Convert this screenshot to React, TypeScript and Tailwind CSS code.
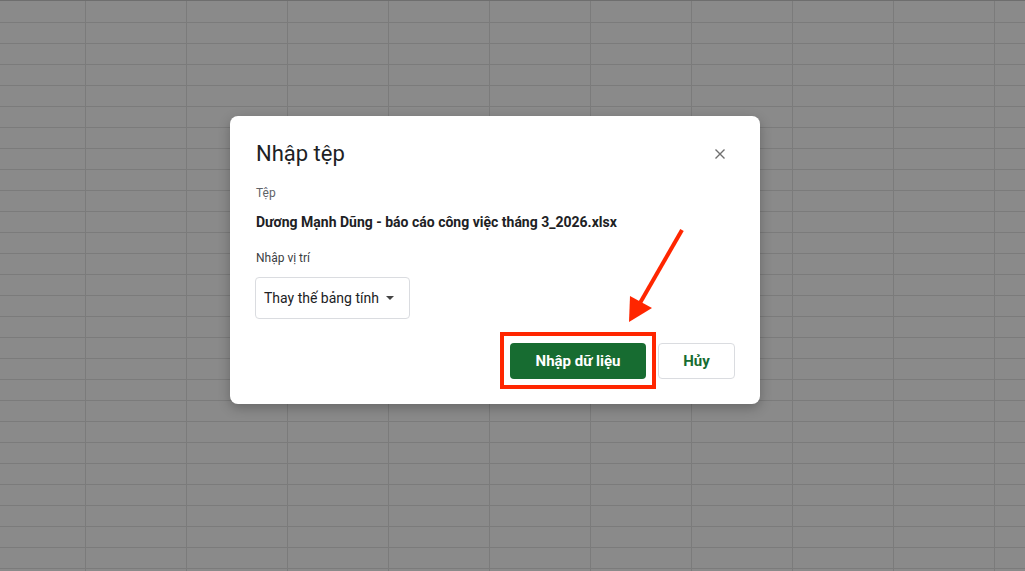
import React from "react";

const ROWS = 28;
const COLS = 11;

export default function App() {
  const rows = Array.from({ length: ROWS });
  const cols = Array.from({ length: COLS });
  return (
    <div className="relative w-[1025px] h-[571px] overflow-hidden bg-[#8a8a8a] font-['Roboto','Liberation_Sans',sans-serif]">
      <div className="flex flex-col border-t border-[#6e6e6e]">
        {rows.map((_, r) => (
          <div key={r} className={`flex h-[21px] shrink-0 ${r === 0 ? "" : "border-t border-[#7b7b7b]"}`}>
            {cols.map((_, c) => (
              <div
                key={c}
                className={
                  c === 0
                    ? "w-[85px] shrink-0"
                    : "w-[101px] shrink-0 border-l border-[#7b7b7b]"
                }
              />
            ))}
          </div>
        ))}
      </div>

      <div className="absolute left-[230px] top-[116px] w-[530px] h-[288px] bg-white rounded-[8px] shadow-[0_4px_12px_rgba(0,0,0,0.25)] pl-[26px] pr-[25px] pt-[24px] pb-[25px] flex flex-col">
        <div className="flex items-start justify-between">
          <div className="text-[22px] leading-[28px] text-[#202124]">Nhập tệp</div>
          <button className="mt-[8px] mr-[9px] w-[12px] h-[12px] flex items-center justify-center">
            <svg width="12" height="12" viewBox="0 0 12 12">
              <path d="M1.5 1.5 L10.5 10.5 M10.5 1.5 L1.5 10.5" stroke="#6f6f6f" strokeWidth="1.4" />
            </svg>
          </button>
        </div>
        <div className="mt-[17px] text-[12px] leading-[16px] text-[#5f6368]">Tệp</div>
        <div className="mt-[11px] text-[14px] leading-[20px] font-bold text-[#202124]">
          Dương Mạnh Dũng - báo cáo công việc tháng 3_2026.xlsx
        </div>
        <div className="mt-[18px] text-[12px] leading-[16px] text-[#3c4043]">Nhập vị trí</div>
        <div className="mt-[11px] ml-[-1px] w-[155px] h-[42px] border border-[#dadce0] rounded-[4px] flex items-center pl-[8px] pr-[15px] justify-between">
          <span className="text-[14px] text-[#202124]">Thay thế bảng tính</span>
          <svg width="8" height="4" viewBox="0 0 8 4">
            <path d="M0 0 L8 0 L4 4 Z" fill="#444" />
          </svg>
        </div>
        <div className="mt-[24px] flex justify-end gap-[12px]">
          <div className="relative">
            <button className="w-[136px] h-[36px] rounded-[4px] bg-[#176c31] text-white text-[15px] font-bold">
              Nhập dữ liệu
            </button>
            <div className="absolute left-[-10px] top-[-11px] w-[156px] h-[57px] border-[4px] border-[#ff2600] pointer-events-none" />
          </div>
          <button className="w-[77px] h-[36px] rounded-[4px] border border-[#dadce0] text-[#176c31] text-[15px] font-bold bg-white">
            Hủy
          </button>
        </div>
      </div>

      <svg className="absolute left-0 top-0 pointer-events-none" width="1025" height="571">
        <line x1="682" y1="230" x2="640" y2="303" stroke="#ff2600" strokeWidth="4" />
        <polygon points="629,322 630,296 652,308" fill="#ff2600" />
      </svg>
    </div>
  );
}
